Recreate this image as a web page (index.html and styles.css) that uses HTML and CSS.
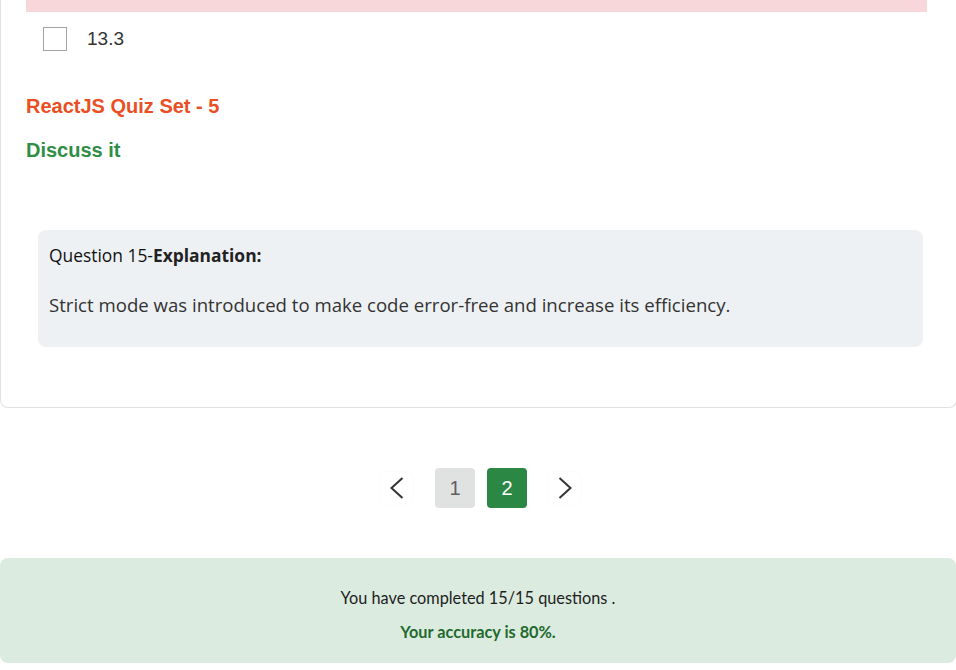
FILE: index.html
```html
<!DOCTYPE html>
<html lang="en">
<head>
<meta charset="utf-8">
<title>ReactJS Quiz</title>
<link rel="stylesheet" href="styles.css">
</head>
<body>
<div class="card">
  <div class="wrong-bar"></div>
  <label class="option">
    <span class="checkbox"></span>
    <span class="option-text">13.3</span>
  </label>
  <a class="quiz-set">ReactJS Quiz Set - 5</a>
  <a class="discuss">Discuss it</a>
  <div class="explanation">
    <div class="exp-title">Question 15-<b>Explanation:</b></div>
    <p class="exp-text">Strict mode was introduced to make code error-free and increase its efficiency.</p>
  </div>
</div>

<nav class="pagination">
  <button class="arrow" aria-label="Previous">
    <svg width="14" height="22" viewBox="0 0 14 22"><path d="M12.5 1 L1.5 11 L12.5 21" fill="none" stroke="#333" stroke-width="2"/></svg>
  </button>
  <button class="page">1</button>
  <button class="page active">2</button>
  <button class="arrow" aria-label="Next">
    <svg width="14" height="22" viewBox="0 0 14 22"><path d="M1.5 1 L12.5 11 L1.5 21" fill="none" stroke="#333" stroke-width="2"/></svg>
  </button>
</nav>

<footer class="result">
  <p class="result-line">You have completed 15/15 questions .</p>
  <p class="result-line accuracy">Your accuracy is 80%.</p>
</footer>
</body>
</html>
```

FILE: styles.css
```css
html, body {
  margin: 0;
  padding: 0;
  background: #fff;
  overflow-x: hidden;
}

body {
  width: 956px;
  font-family: "Liberation Sans", Arial, sans-serif;
}

.card {
  width: 957px;
  box-sizing: border-box;
  border: 1px solid #e1e1e1;
  border-top: none;
  border-radius: 0 0 8px 8px;
  padding: 0 29px 0 25px;
  display: flex;
  flex-direction: column;
  align-items: flex-start;
}

.wrong-bar {
  align-self: stretch;
  height: 12px;
  background: #f8d7da;
}

.option {
  display: flex;
  align-items: center;
  gap: 20px;
  padding: 15px 0 0 17px;
  height: 24px;
}

.checkbox {
  width: 22px;
  height: 22px;
  border: 1px solid #a3a3a3;
  background: #fff;
}

.option-text {
  font-size: 19px;
  color: #333;
}

.quiz-set {
  margin-top: 44px;
  font-size: 20px;
  line-height: 23px;
  font-weight: bold;
  color: #ea4f23;
}

.discuss {
  margin-top: 21px;
  font-size: 20px;
  line-height: 23px;
  font-weight: bold;
  color: #2f8d46;
}

.explanation {
  margin: 68px 4px 60px 12px;
  align-self: stretch;
  box-sizing: border-box;
  height: 117px;
  background: #eef1f4;
  border-radius: 8px;
  padding: 13px 11px;
  font-family: "Open Sans", "Noto Sans", sans-serif;
  color: #222;
}

.exp-title {
  font-size: 17.4px;
  line-height: 24px;
  color: #111;
}

.exp-title b {
  font-weight: 700;
  color: #222;
}

.exp-text {
  margin: 25px 0 0;
  font-size: 18.6px;
  line-height: 25px;
  color: #333;
}

.pagination {
  margin-top: 60px;
  display: flex;
  justify-content: center;
  align-items: center;
  padding-left: 5px;
}

.pagination button {
  font-family: "Liberation Sans", Arial, sans-serif;
  border: none;
  padding: 0;
  cursor: pointer;
}

.arrow {
  width: 33px;
  height: 33px;
  background: #fff;
  border-radius: 6px;
  box-shadow: 0 0 2px rgba(0, 0, 0, 0.06);
  display: flex;
  align-items: center;
  justify-content: center;
}

.arrow:first-child { margin-right: 22px; }
.arrow:last-child { margin-left: 21px; }

.page {
  width: 40px;
  height: 40px;
  border-radius: 4px;
  background: #e0e2e1;
  color: #5f5f5f;
  font-size: 20px;
}

.page + .page { margin-left: 12px; }

.page.active {
  background: #2b8744;
  color: #fff;
}

.result {
  margin-top: 50px;
  height: 105px;
  box-sizing: border-box;
  background: #dcebdf;
  border-radius: 8px;
  padding-top: 29px;
  text-align: center;
  font-family: "Lato", "Open Sans", sans-serif;
  font-size: 16.3px;
}

.result-line {
  margin: 0;
  line-height: 22px;
  color: #1e1e1e;
}

.accuracy {
  margin-top: 12px;
  font-weight: 700;
  color: #1f6a2f;
}
```
